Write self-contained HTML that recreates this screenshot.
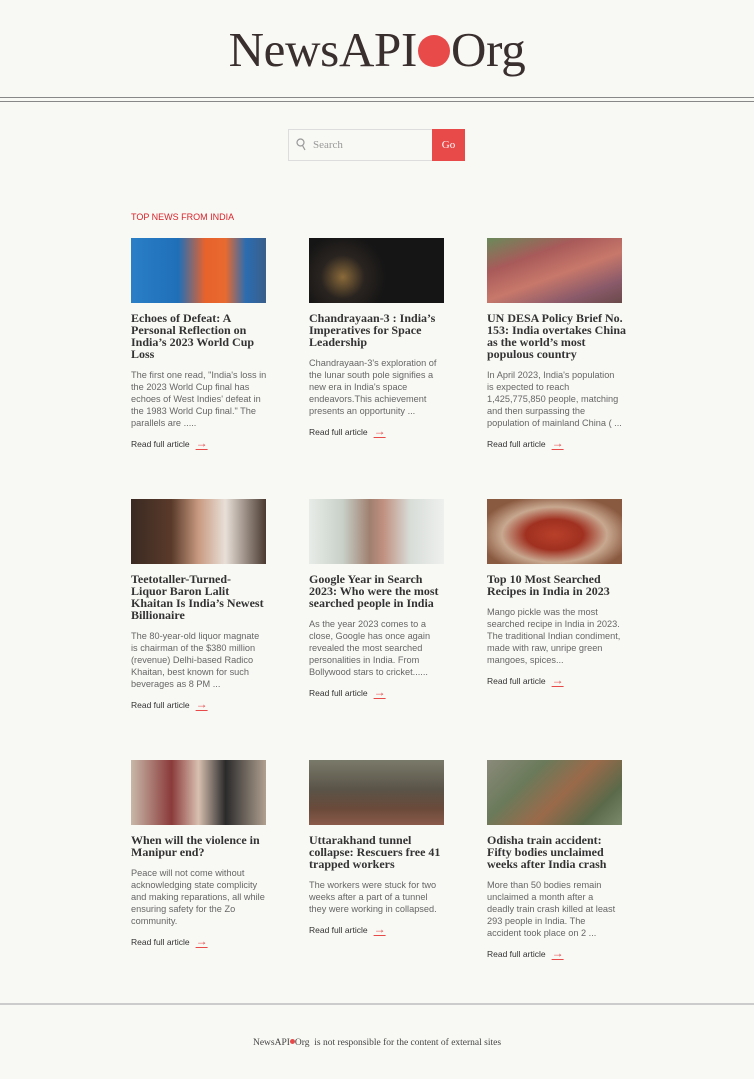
<!DOCTYPE html>
<html><head><meta charset="utf-8"><style>
*{margin:0;padding:0;box-sizing:border-box}
body{width:754px;height:1079px;background:#f8f8f4;font-family:"Liberation Sans",sans-serif;position:relative;overflow:hidden}
.logo{position:absolute;top:21px;left:0;width:754px;text-align:center;font-family:"Liberation Serif",serif;font-size:49px;color:#3a2f2f;letter-spacing:-0.3px}
.dot{display:inline-block;width:32px;height:32px;border-radius:50%;background:#e84a4a;vertical-align:-1px;margin:0 1px}
.hl1{position:absolute;top:97px;left:0;width:754px;border-top:1px solid #888}
.hl2{position:absolute;top:101px;left:0;width:754px;border-top:1px solid #888}
.search{position:absolute;left:288px;top:129px;width:145px;height:32px;border:1px solid #ddd;background:#f8f8f4;font-family:"Liberation Serif",serif;font-size:11px;color:#999;padding:9px 0 0 24px}
.search svg{position:absolute;left:7px;top:8px}
.go{position:absolute;left:432px;top:129px;width:33px;height:32px;background:#e84a4a;color:#fff;font-family:"Liberation Serif",serif;font-size:11px;text-align:center;line-height:32px}
.sec{position:absolute;left:131px;top:212px;font-size:9px;color:#d9232a}
.card{position:absolute;width:136px;white-space:nowrap}
.img{width:135px;height:65px}
.t{margin-top:9px;font-family:"Liberation Serif",serif;font-weight:bold;font-size:12px;line-height:12px;color:#333}
.d{margin-top:9px;font-size:9.2px;line-height:12px;color:#666}
.r{margin-top:8px;font-size:8.5px;color:#333;line-height:12px}
.r span{color:#e84a4a;font-size:12px;margin-left:6px;text-decoration:underline;text-underline-offset:2px}
.fl{position:absolute;top:1003px;left:0;width:754px;border-top:2px solid #ccc}
.foot{position:absolute;top:1038px;left:0;width:754px;text-align:center;font-family:"Liberation Serif",serif;font-size:9.5px;color:#444}
.fd{display:inline-block;width:5px;height:5px;border-radius:50%;background:#e84a4a;vertical-align:1px}
</style></head><body>
<div class="logo">NewsAPI<span class="dot"></span>Org</div>
<div class="hl1"></div><div class="hl2"></div>
<div class="search"><svg width="10" height="14" viewBox="0 0 10 14"><circle cx="4.5" cy="4.5" r="3.5" fill="none" stroke="#999" stroke-width="1.2"/><path d="M6.5 7.5 L9 12" stroke="#999" stroke-width="1.2"/></svg>Search</div>
<div class="go">Go</div>
<div class="sec">TOP NEWS FROM INDIA</div>

<div class="card" style="left:131px;top:238px"><div class="img" style="background:linear-gradient(90deg,#2a7fc6 0%,#1f6fb8 35%,#e8622c 55%,#e86a30 70%,#2b6cb0 85%,#3a5f8a 100%)"></div>
<div class="t">Echoes of Defeat: A<br>Personal Reflection on<br>India’s 2023 World Cup<br>Loss</div>
<div class="d">The first one read, "India's loss in<br>the 2023 World Cup final has<br>echoes of West Indies' defeat in<br>the 1983 World Cup final." The<br>parallels are .....</div>
<div class="r">Read full article<span>→</span></div></div>

<div class="card" style="left:309px;top:238px"><div class="img" style="background:radial-gradient(circle at 25% 60%,#8a6a3a 0,#2a2420 20%,#151515 40%),#151515"></div>
<div class="t">Chandrayaan-3 : India’s<br>Imperatives for Space<br>Leadership</div>
<div class="d">Chandrayaan-3's exploration of<br>the lunar south pole signifies a<br>new era in India's space<br>endeavors.This achievement<br>presents an opportunity ...</div>
<div class="r">Read full article<span>→</span></div></div>

<div class="card" style="left:487px;top:238px"><div class="img" style="background:linear-gradient(160deg,#6a8a5a 0%,#a85a5a 30%,#c8786a 55%,#8a5a6a 80%,#6a4a4a 100%)"></div>
<div class="t">UN DESA Policy Brief No.<br>153: India overtakes China<br>as the world’s most<br>populous country</div>
<div class="d">In April 2023, India's population<br>is expected to reach<br>1,425,775,850 people, matching<br>and then surpassing the<br>population of mainland China ( ...</div>
<div class="r">Read full article<span>→</span></div></div>

<div class="card" style="left:131px;top:499px"><div class="img" style="background:linear-gradient(90deg,#3a2a22 0%,#5a3a2a 30%,#c89a80 50%,#e8e0d8 70%,#4a3a30 100%)"></div>
<div class="t">Teetotaller-Turned-<br>Liquor Baron Lalit<br>Khaitan Is India’s Newest<br>Billionaire</div>
<div class="d">The 80-year-old liquor magnate<br>is chairman of the $380 million<br>(revenue) Delhi-based Radico<br>Khaitan, best known for such<br>beverages as 8 PM ...</div>
<div class="r">Read full article<span>→</span></div></div>

<div class="card" style="left:309px;top:499px"><div class="img" style="background:linear-gradient(90deg,#e8ece8 0%,#c8d0c8 25%,#a08070 45%,#c09080 55%,#d8ddd8 75%,#eef0ee 100%)"></div>
<div class="t">Google Year in Search<br>2023: Who were the most<br>searched people in India</div>
<div class="d">As the year 2023 comes to a<br>close, Google has once again<br>revealed the most searched<br>personalities in India. From<br>Bollywood stars to cricket......</div>
<div class="r">Read full article<span>→</span></div></div>

<div class="card" style="left:487px;top:499px"><div class="img" style="background:radial-gradient(ellipse at 50% 55%,#b8402a 0,#a03020 30%,#c8a890 55%,#8a5a40 80%)"></div>
<div class="t">Top 10 Most Searched<br>Recipes in India in 2023</div>
<div class="d">Mango pickle was the most<br>searched recipe in India in 2023.<br>The traditional Indian condiment,<br>made with raw, unripe green<br>mangoes, spices...</div>
<div class="r">Read full article<span>→</span></div></div>

<div class="card" style="left:131px;top:760px"><div class="img" style="background:linear-gradient(90deg,#c8b8a8 0%,#8a3a3a 30%,#d8c0b0 50%,#2a2a2a 70%,#b0a090 100%)"></div>
<div class="t">When will the violence in<br>Manipur end?</div>
<div class="d">Peace will not come without<br>acknowledging state complicity<br>and making reparations, all while<br>ensuring safety for the Zo<br>community.</div>
<div class="r">Read full article<span>→</span></div></div>

<div class="card" style="left:309px;top:760px"><div class="img" style="background:linear-gradient(180deg,#7a7a6a 0%,#5a5448 45%,#6a4a3a 75%,#8a5a4a 100%)"></div>
<div class="t">Uttarakhand tunnel<br>collapse: Rescuers free 41<br>trapped workers</div>
<div class="d">The workers were stuck for two<br>weeks after a part of a tunnel<br>they were working in collapsed.</div>
<div class="r">Read full article<span>→</span></div></div>

<div class="card" style="left:487px;top:760px"><div class="img" style="background:linear-gradient(135deg,#8a8a7a 0%,#6a7a5a 30%,#9a6a4a 55%,#5a6a4a 80%,#7a8a6a 100%)"></div>
<div class="t">Odisha train accident:<br>Fifty bodies unclaimed<br>weeks after India crash</div>
<div class="d">More than 50 bodies remain<br>unclaimed a month after a<br>deadly train crash killed at least<br>293 people in India. The<br>accident took place on 2 ...</div>
<div class="r">Read full article<span>→</span></div></div>

<div class="fl"></div>
<div class="foot">NewsAPI<span class="fd"></span>Org &nbsp;is not responsible for the content of external sites</div>
</body></html>
